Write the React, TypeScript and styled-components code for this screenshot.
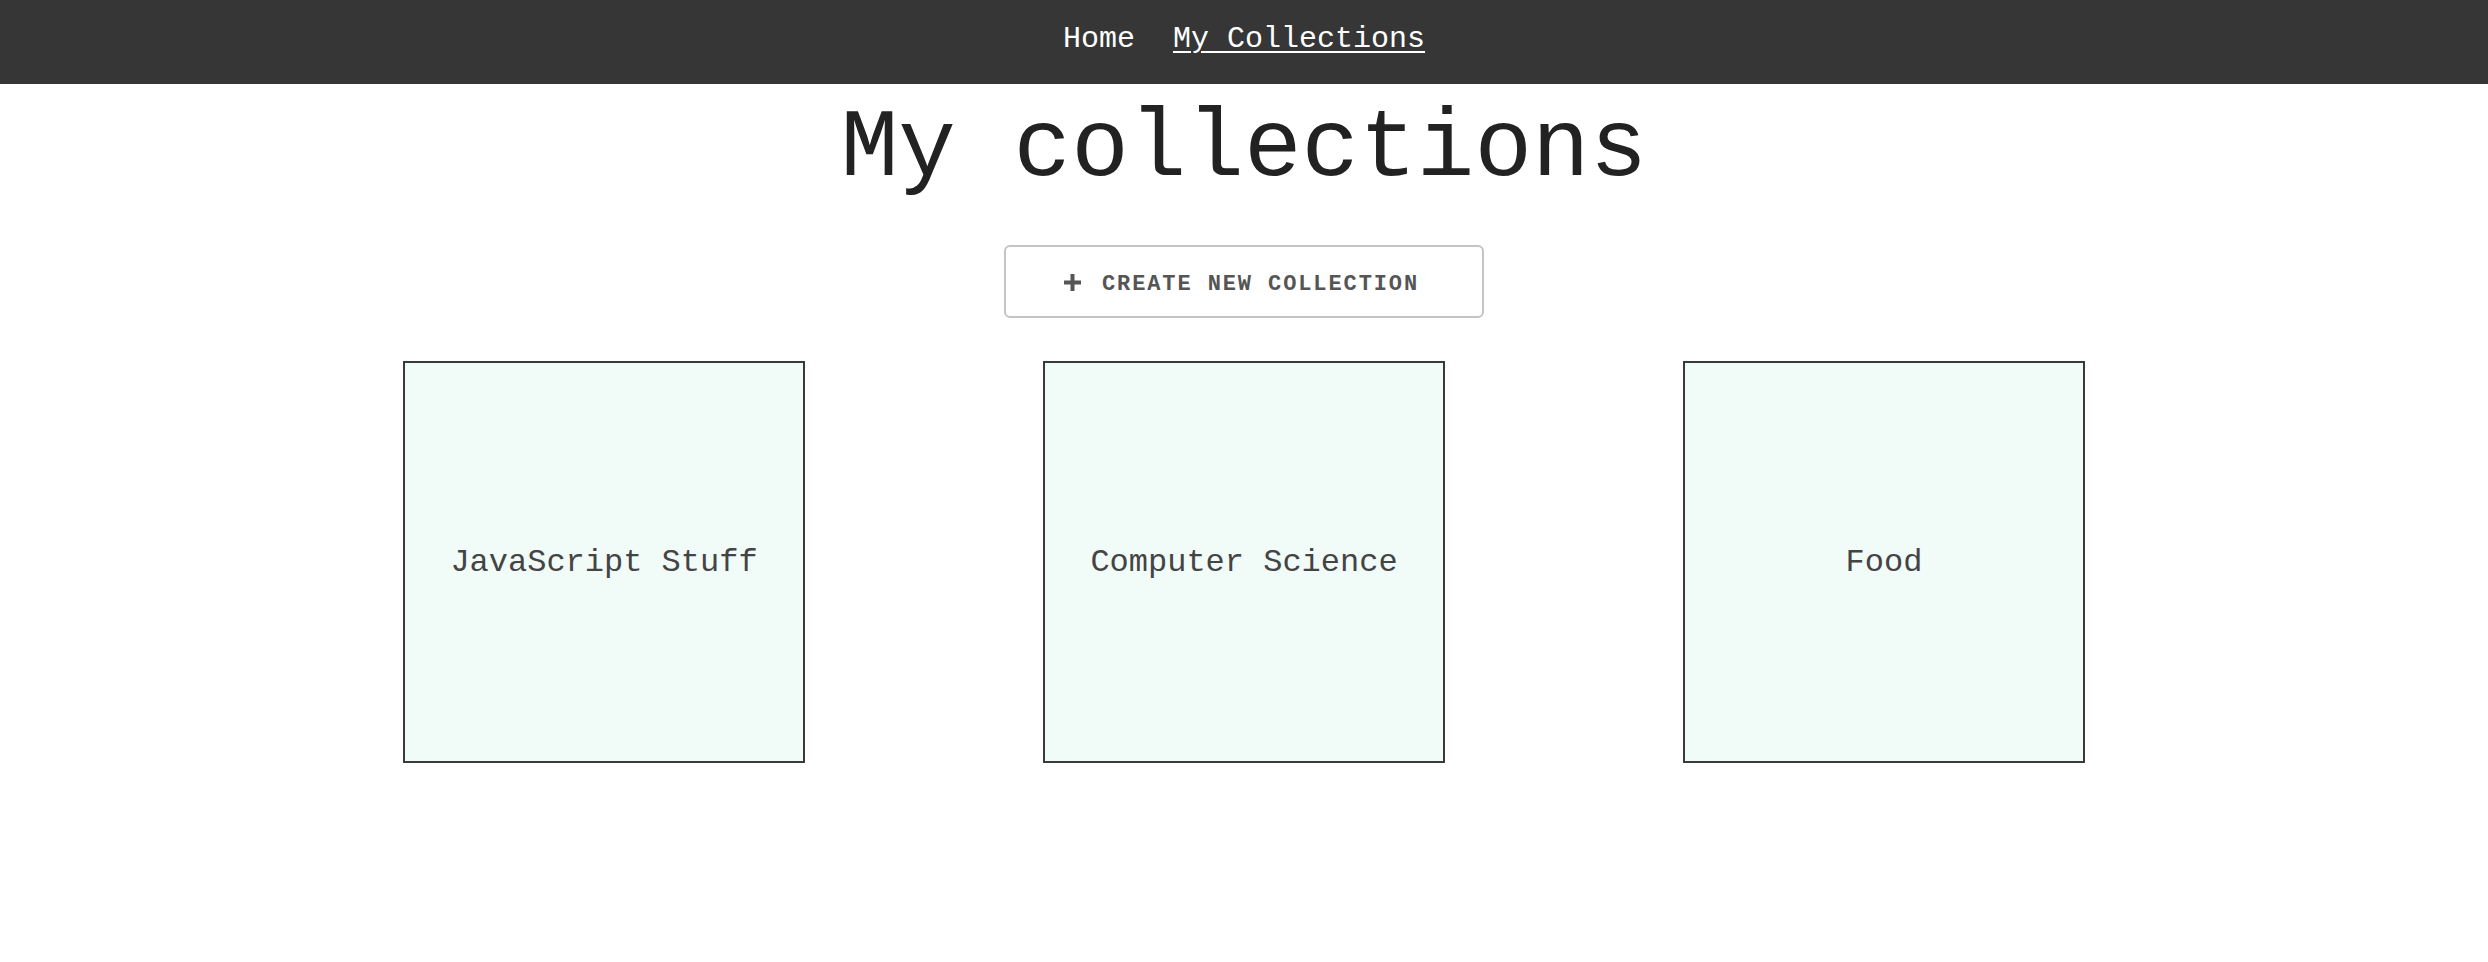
import React from 'react'
import styled, { createGlobalStyle } from 'styled-components'

const GlobalStyle = createGlobalStyle`
  body {
    margin: 0;
    background: #ffffff;
    font-family: "Courier New", "Liberation Mono", monospace;
  }
`

const Nav = styled.nav`
  height: 84px;
  background-color: #363636;
  display: flex;
  align-items: center;
  justify-content: center;
  gap: 38px;
  padding-bottom: 6px;
  box-sizing: border-box;
`

const NavLink = styled.a<{ active?: boolean }>`
  color: #ffffff;
  font-size: 30px;
  text-decoration: ${({ active }) => (active ? 'underline' : 'none')};
  text-underline-offset: 4px;
  text-decoration-thickness: 2px;
  cursor: pointer;
`

const Main = styled.main`
  display: flex;
  flex-direction: column;
  align-items: center;
`

const Title = styled.h1`
  margin: 11px 0 0;
  font-size: 96px;
  font-weight: normal;
  line-height: normal;
  color: #222222;
`

const CreateButton = styled.button`
  margin-top: 41px;
  width: 480px;
  height: 73px;
  display: flex;
  align-items: center;
  justify-content: center;
  gap: 20px;
  background: #ffffff;
  border: 2px solid #c4c4c4;
  border-radius: 6px;
  font-family: inherit;
  font-size: 22px;
  font-weight: bold;
  letter-spacing: 1.9px;
  color: #555555;
  padding: 6px 6px 0 0;
  cursor: pointer;

  svg {
    margin-bottom: 5px;
  }
`

const Grid = styled.div`
  margin-top: 43px;
  width: 1920px;
  display: grid;
  grid-template-columns: repeat(3, 640px);
  justify-items: center;
`

const Card = styled.div`
  width: 402px;
  height: 402px;
  box-sizing: border-box;
  border: 2px solid #3a3a3a;
  background-color: #f1fbf8;
  display: flex;
  align-items: center;
  justify-content: center;
  font-size: 32px;
  color: #444444;
`

const Plus = () => (
  <svg width="19" height="19" viewBox="0 0 19 19">
    <path d="M9.5 1v17M1 9.5h17" stroke="#555555" strokeWidth="4" />
  </svg>
)

const collections = ['JavaScript Stuff', 'Computer Science', 'Food']

export default function App() {
  return (
    <>
      <GlobalStyle />
      <Nav>
        <NavLink>Home</NavLink>
        <NavLink active>My Collections</NavLink>
      </Nav>
      <Main>
        <Title>My collections</Title>
        <CreateButton>
          <Plus />
          CREATE NEW COLLECTION
        </CreateButton>
        <Grid>
          {collections.map((name) => (
            <Card key={name}>{name}</Card>
          ))}
        </Grid>
      </Main>
    </>
  )
}
